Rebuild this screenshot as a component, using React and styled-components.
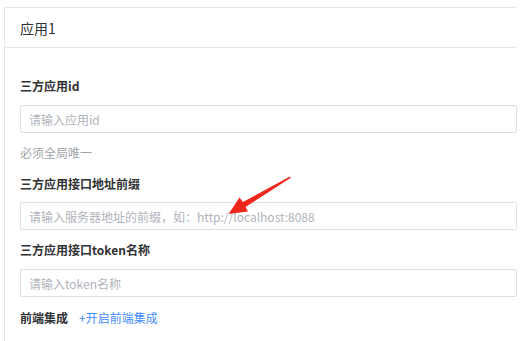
import React from "react";
import styled, { createGlobalStyle } from "styled-components";

const Global = createGlobalStyle`
  html, body { margin: 0; padding: 0; background: #fff; overflow: hidden; }
  body { font-family: "Noto Sans CJK SC", "Noto Sans", sans-serif; }
  * { box-sizing: border-box; }
`;

const Page = styled.div`
  position: relative;
  width: 524px;
  height: 341px;
  overflow: hidden;
  padding: 7px 0 0 4px;
`;

const Card = styled.div`
  width: 513px;
  height: 334px;
  border-top: 1px solid #e4e7ed;
  border-left: 1px solid #e4e7ed;
  background: #fff;
`;

const Header = styled.div`
  height: 40px;
  display: flex;
  align-items: center;
  padding-left: 15px;
  font-size: 14px;
  color: #303133;
  border-bottom: 1px solid #e4e7ed;
`;

const Body = styled.div`
  display: flex;
  flex-direction: column;
  padding: 28px 0 0 15px;
`;

const Label = styled.div`
  height: 20px;
  line-height: 20px;
  font-size: 12px;
  font-weight: 700;
  color: #303133;
  margin-top: ${(p) => p.$mt || 0}px;
`;

const Input = styled.input`
  display: block;
  width: 100%;
  height: 28px;
  margin-top: ${(p) => p.$mt || 0}px;
  padding: 0 8px;
  border: 1px solid #dcdfe6;
  border-radius: 2px;
  font-family: inherit;
  font-size: 12px;
  color: #606266;
  outline: none;
  &::placeholder { color: #b0b4bb; }
`;

const Help = styled.div`
  height: 20px;
  line-height: 20px;
  margin-top: 10px;
  font-size: 12px;
  color: #a0a3a8;
`;

const Row = styled.div`
  display: flex;
  align-items: center;
  gap: 11px;
  margin-top: 11px;
`;

const Link = styled.span`
  font-size: 12px;
  color: #3f8cff;
  line-height: 20px;
`;

const Arrow = styled.svg`
  position: absolute;
  left: 0;
  top: 0;
  pointer-events: none;
`;

export default function App() {
  return (
    <>
      <Global />
      <Page>
        <Card>
          <Header>应用1</Header>
          <Body>
            <Label>三方应用id</Label>
            <Input $mt={9} placeholder="请输入应用id" />
            <Help>必须全局唯一</Help>
            <Label $mt={11}>三方应用接口地址前缀</Label>
            <Input $mt={8} placeholder="请输入服务器地址的前缀，如：http://localhost:8088" />
            <Label $mt={10}>三方应用接口token名称</Label>
            <Input $mt={9} placeholder="请输入token名称" />
            <Row>
              <Label>前端集成</Label>
              <Link>+开启前端集成</Link>
            </Row>
          </Body>
        </Card>
        <Arrow width="524" height="341" viewBox="0 0 524 341">
          <polygon
            points="290,176.5 243,202 239.5,197.5 228.5,214 248,211.5 245.5,207 290.8,177.8"
            fill="#f0261c"
          />
        </Arrow>
      </Page>
    </>
  );
}
